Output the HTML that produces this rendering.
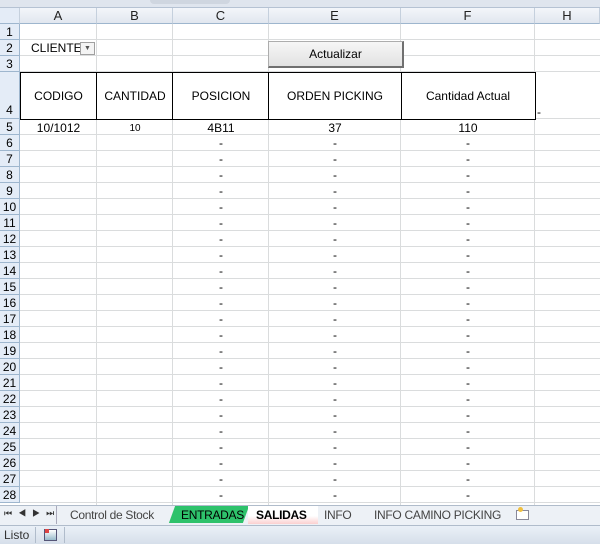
<!DOCTYPE html>
<html><head><meta charset="utf-8"><style>
*{margin:0;padding:0;box-sizing:border-box}
body{width:600px;height:544px;overflow:hidden;background:#fff;font-family:"Liberation Sans",Arial,sans-serif;font-size:12px;position:relative}
.a{position:absolute;white-space:nowrap}
.hl{position:absolute;left:0;width:600px;height:1px;background:#dadcdd}
.vl{position:absolute;top:24px;height:481px;width:1px;background:#dadcdd}
.rn{position:absolute;left:0;width:20px;background:#e4ecf7;border-right:1px solid #9eb6ce;border-bottom:1px solid #9eb6ce;color:#000;font-size:12px;text-align:center;line-height:16px}
.ch{position:absolute;top:8px;height:16px;background:linear-gradient(#f3f6fa,#e1e7ef);border-right:1px solid #c5d0dd;border-bottom:1px solid #9eb6ce;text-align:center;line-height:16px;font-size:13px;color:#222}
.c{position:absolute;text-align:center;line-height:16px;font-size:12px;white-space:nowrap}
.t{position:absolute;top:506px;height:18px;font-size:12px;line-height:18px;color:#444;white-space:nowrap;letter-spacing:-0.3px}
</style></head><body>
<div class="a" style="left:0;top:0;width:600px;height:8px;background:#dfe5ee;border-bottom:1px solid #b5c2d3"></div>
<div class="a" style="left:150px;top:0;width:80px;height:4px;background:#cfd6e0;border-radius:0 0 6px 6px"></div>
<div class="ch" style="left:0;width:20px;background:#e4ecf7"></div>
<div class="ch" style="left:20px;width:77px">A</div>
<div class="ch" style="left:97px;width:76px">B</div>
<div class="ch" style="left:173px;width:96px">C</div>
<div class="ch" style="left:269px;width:132px">E</div>
<div class="ch" style="left:401px;width:134px">F</div>
<div class="ch" style="left:535px;width:65px">H</div>

<div class="hl" style="top:39px"></div><div class="hl" style="top:55px"></div><div class="hl" style="top:71px"></div>
<div class="hl" style="top:118px"></div><div class="hl" style="top:134px"></div>
<div class="hl" style="top:150px"></div><div class="hl" style="top:166px"></div><div class="hl" style="top:182px"></div><div class="hl" style="top:198px"></div><div class="hl" style="top:214px"></div><div class="hl" style="top:230px"></div><div class="hl" style="top:246px"></div><div class="hl" style="top:262px"></div><div class="hl" style="top:278px"></div><div class="hl" style="top:294px"></div><div class="hl" style="top:310px"></div><div class="hl" style="top:326px"></div><div class="hl" style="top:342px"></div><div class="hl" style="top:358px"></div><div class="hl" style="top:374px"></div><div class="hl" style="top:390px"></div><div class="hl" style="top:406px"></div><div class="hl" style="top:422px"></div><div class="hl" style="top:438px"></div><div class="hl" style="top:454px"></div><div class="hl" style="top:470px"></div><div class="hl" style="top:486px"></div><div class="hl" style="top:502px"></div>
<div class="vl" style="left:96px"></div><div class="vl" style="left:172px"></div><div class="vl" style="left:268px"></div><div class="vl" style="left:400px"></div><div class="vl" style="left:534px"></div>

<div class="rn" style="top:24px;height:16px">1</div>
<div class="rn" style="top:40px;height:16px">2</div>
<div class="rn" style="top:56px;height:16px">3</div>
<div class="rn" style="top:72px;height:47px;line-height:76px">4</div>
<div class="rn" style="top:119px;height:16px">5</div>
<div class="rn" style="top:135px;height:16px">6</div><div class="rn" style="top:151px;height:16px">7</div><div class="rn" style="top:167px;height:16px">8</div><div class="rn" style="top:183px;height:16px">9</div><div class="rn" style="top:199px;height:16px">10</div><div class="rn" style="top:215px;height:16px">11</div><div class="rn" style="top:231px;height:16px">12</div><div class="rn" style="top:247px;height:16px">13</div><div class="rn" style="top:263px;height:16px">14</div><div class="rn" style="top:279px;height:16px">15</div><div class="rn" style="top:295px;height:16px">16</div><div class="rn" style="top:311px;height:16px">17</div><div class="rn" style="top:327px;height:16px">18</div><div class="rn" style="top:343px;height:16px">19</div><div class="rn" style="top:359px;height:16px">20</div><div class="rn" style="top:375px;height:16px">21</div><div class="rn" style="top:391px;height:16px">22</div><div class="rn" style="top:407px;height:16px">23</div><div class="rn" style="top:423px;height:16px">24</div><div class="rn" style="top:439px;height:16px">25</div><div class="rn" style="top:455px;height:16px">26</div><div class="rn" style="top:471px;height:16px">27</div><div class="rn" style="top:487px;height:16px">28</div>

<div class="c" style="left:31px;top:40px;text-align:left;font-size:12px">CLIENTE</div>
<div class="a" style="left:80px;top:42px;width:15px;height:13px;border:1px solid #a0a0a0;background:#f4f4f4;font-size:7px;text-align:center;line-height:11px;color:#555">▼</div>
<div class="a" style="left:268px;top:41px;width:136px;height:27px;background:linear-gradient(#f6f6f6,#e2e2e2);border:1px solid #adadad;border-right:2px solid #707070;border-bottom:2px solid #707070;text-align:center;line-height:25px;font-size:12px">Actualizar</div>

<div class="a" style="left:20px;top:72px;width:516px;height:48px;border:1px solid #000;background:#fff"></div>
<div class="a" style="left:96px;top:72px;width:1px;height:48px;background:#000"></div>
<div class="a" style="left:172px;top:72px;width:1px;height:48px;background:#000"></div>
<div class="a" style="left:268px;top:72px;width:1px;height:48px;background:#000"></div>
<div class="a" style="left:401px;top:72px;width:1px;height:48px;background:#000"></div>
<div class="c" style="left:20px;width:77px;top:88px">CODIGO</div>
<div class="c" style="left:97px;width:76px;top:88px">CANTIDAD</div>
<div class="c" style="left:173px;width:96px;top:88px">POSICION</div>
<div class="c" style="left:269px;width:132px;top:88px">ORDEN PICKING</div>
<div class="c" style="left:401px;width:134px;top:88px">Cantidad Actual</div>
<div class="c" style="left:537px;top:104px">-</div>

<div class="c" style="left:20px;width:77px;top:120px">10/1012</div>
<div class="c" style="left:97px;width:76px;top:121px;font-size:10px">10</div>
<div class="c" style="left:173px;width:96px;top:120px">4B11</div>
<div class="c" style="left:269px;width:132px;top:120px">37</div>
<div class="c" style="left:401px;width:134px;top:120px">110</div>

<div class="a" style="left:173px;top:135px;width:96px;line-height:16px;text-align:center">-<br>-<br>-<br>-<br>-<br>-<br>-<br>-<br>-<br>-<br>-<br>-<br>-<br>-<br>-<br>-<br>-<br>-<br>-<br>-<br>-<br>-<br>-</div>
<div class="a" style="left:269px;top:135px;width:132px;line-height:16px;text-align:center">-<br>-<br>-<br>-<br>-<br>-<br>-<br>-<br>-<br>-<br>-<br>-<br>-<br>-<br>-<br>-<br>-<br>-<br>-<br>-<br>-<br>-<br>-</div>
<div class="a" style="left:401px;top:135px;width:134px;line-height:16px;text-align:center">-<br>-<br>-<br>-<br>-<br>-<br>-<br>-<br>-<br>-<br>-<br>-<br>-<br>-<br>-<br>-<br>-<br>-<br>-<br>-<br>-<br>-<br>-</div>

<div class="a" style="left:0;top:505px;width:600px;height:21px;background:#edf1f6;border-top:1px solid #b0bccb;border-bottom:1px solid #b0bccb"></div>
<div class="a" style="left:4px;top:508px;font-size:9px;color:#333;letter-spacing:6px">⏮◀▶⏭</div>
<div class="a" style="left:56px;top:506px;width:1px;height:18px;background:#aab"></div>
<div class="t" style="left:70px">Control de Stock</div>
<div class="a" style="left:172px;top:506px;width:74px;height:17px;background:#2ec26b;transform:skewX(-20deg)"></div>
<div class="t" style="left:181px;color:#000">ENTRADAS</div>
<div class="a" style="left:248px;top:506px;width:70px;height:18px;background:linear-gradient(#fff 55%,#fbd0d0)"></div>
<div class="t" style="left:256px;color:#000;font-weight:bold">SALIDAS</div>
<div class="t" style="left:324px">INFO</div>
<div class="t" style="left:374px">INFO CAMINO PICKING</div>
<div class="a" style="left:516px;top:510px;width:13px;height:10px;border:1px solid #889;background:#fff"></div>
<div class="a" style="left:518px;top:507px;width:5px;height:5px;background:#f0c040;border-radius:50%"></div>
<div class="a" style="left:0;top:526px;width:600px;height:18px;background:linear-gradient(#eaf0f7,#d6dfea)"></div>
<div class="a" style="left:4px;top:528px;font-size:12px;color:#333">Listo</div>
<div class="a" style="left:35px;top:527px;width:1px;height:16px;background:#b0bccb"></div>
<div class="a" style="left:44px;top:529px;width:13px;height:12px;border:1px solid #557;background:linear-gradient(#fff,#9bc)"></div>
<div class="a" style="left:45px;top:529px;width:4px;height:4px;background:#d44"></div>
<div class="a" style="left:64px;top:527px;width:1px;height:16px;background:#b0bccb"></div>
</body></html>
